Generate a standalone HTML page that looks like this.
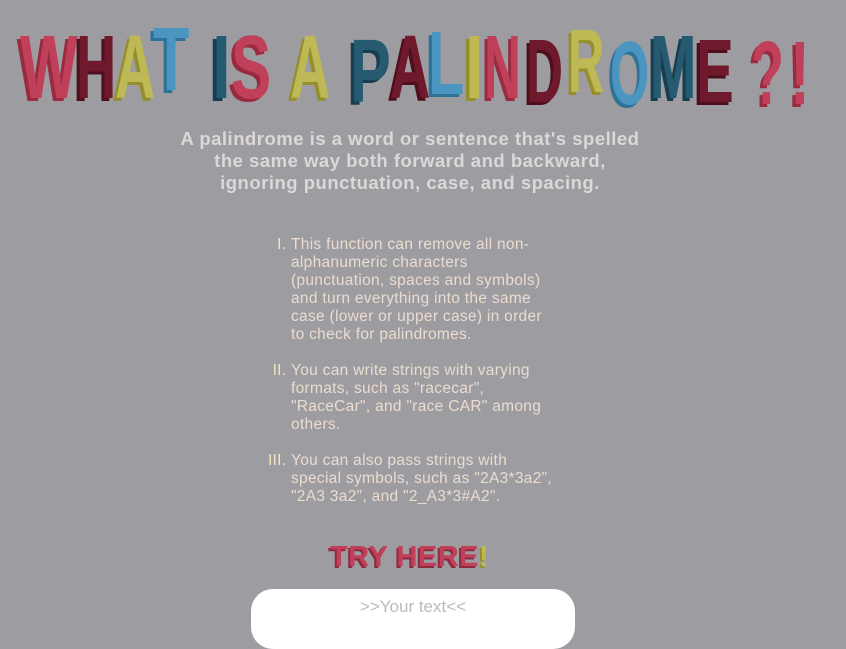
<!DOCTYPE html>
<html><head><meta charset="utf-8"><style>
html,body{margin:0;padding:0;width:846px;height:611px;overflow:hidden;background:#9c9ca1;font-family:"Liberation Sans",sans-serif}
.l{position:absolute;top:23px;font-family:"Liberation Sans",sans-serif;font-weight:bold;font-size:90px;line-height:90px;transform-origin:0 0}
.r{color:#c0405a;text-shadow:-5px 3px 0 #9a2a40}
.m{color:#6e1a2c;text-shadow:-5px 3px 0 #4e0f1d}
.y{color:#bfb955;text-shadow:-5px 3px 0 #948e2c}
.b{color:#4a96c0;text-shadow:-5px 3px 0 #2f7298}
.t{color:#255a70;text-shadow:-5px 3px 0 #163e50}
p.d{position:absolute;left:150px;width:520px;top:128px;margin:0;text-align:center;color:#dcd8d8;font-weight:bold;font-size:18.5px;letter-spacing:0.5px;line-height:22px}
ol{position:absolute;left:291px;top:236px;width:262px;margin:0;padding:0;list-style:upper-roman;color:#ecdcd0;font-size:15.5px;letter-spacing:0.3px;line-height:18px}
ol li{margin-bottom:18px}
ol li::marker{color:#f0e6c0}
.try{position:absolute;left:330px;top:541px;font-weight:bold;font-size:29px;color:#c0405a;text-shadow:-2px 2px 0 #8e2a40;letter-spacing:0.5px}
.try span{color:#bfb955;text-shadow:-2px 2px 0 #948e2c}
.in{position:absolute;left:251px;top:589px;width:324px;height:60px;background:#fff;border-radius:22px;text-align:center;color:#bbb;font-size:17px;line-height:36px}
</style></head><body>
<span class="l r" style="left:20px;transform:scaleX(0.68)">W</span>
<span class="l m" style="left:76px;transform:scaleX(0.62)">H</span>
<span class="l y" style="left:115px;transform:scaleX(0.62)">A</span>
<span class="l b" style="left:153px;top:15px;transform:scaleX(0.66)">T</span>
<span class="l t" style="left:212px;transform:scaleX(0.75)">I</span>
<span class="l r" style="left:231px;transform:scaleX(0.67)">S</span>
<span class="l y" style="left:290px;transform:scaleX(0.62)">A</span>
<span class="l t" style="left:350px;top:27px;transform:scaleX(0.68)">P</span>
<span class="l m" style="left:390px;transform:scaleX(0.62)">A</span>
<span class="l b" style="left:428px;top:19px;transform:scaleX(0.66)">L</span>
<span class="l y" style="left:465px;transform:scaleX(0.75)">I</span>
<span class="l r" style="left:484px;transform:scaleX(0.57)">N</span>
<span class="l m" style="left:526px;top:27px;transform:scaleX(0.57)">D</span>
<span class="l y" style="left:568px;top:17px;transform:scaleX(0.56)">R</span>
<span class="l b" style="left:610px;top:29px;transform:scaleX(0.56)">O</span>
<span class="l t" style="left:650px;top:23px;transform:scaleX(0.62)">M</span>
<span class="l m" style="left:696px;top:27px;transform:scaleX(0.63)">E</span>
<span class="l r" style="left:751px;top:29px;transform:scaleX(0.6)">?</span>
<span class="l r" style="left:790px;top:29px;transform:scaleX(0.66)">!</span>
<p class="d">A palindrome is a word or sentence that's spelled<br>the same way both forward and backward,<br>ignoring punctuation, case, and spacing.</p>
<ol>
<li>This function can remove all non-alphanumeric characters (punctuation, spaces and symbols) and turn everything into the same case (lower or upper case) in order to check for palindromes.</li>
<li>You can write strings with varying formats, such as "racecar", "RaceCar", and "race CAR" among others.</li>
<li>You can also pass strings with special symbols, such as "2A3*3a2", "2A3 3a2", and "2_A3*3#A2".</li>
</ol>
<div class="try">TRY HERE<span>!</span></div>
<div class="in">&gt;&gt;Your text&lt;&lt;</div>
</body></html>
